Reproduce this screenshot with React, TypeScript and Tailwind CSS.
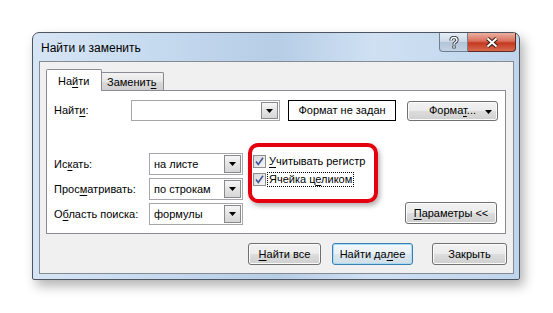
import React from 'react';

const U: React.FC<{ children: React.ReactNode }> = ({ children }) => (
  <span className="underline underline-offset-[2px] decoration-1">{children}</span>
);

const Arrow: React.FC = () => (
  <svg width="7" height="4" viewBox="0 0 7 4">
    <path d="M0 0h7L3.5 4z" fill="#000" />
  </svg>
);

interface ComboProps {
  value?: string;
  className?: string;
}

const Combo: React.FC<ComboProps> = ({ value = '', className = '' }) => (
  <div className={`flex items-stretch border border-[#a5a7ad] bg-white ${className}`}>
    <div className="flex-1 pl-[4px] flex items-center leading-none whitespace-nowrap">{value}</div>
    <div className="w-[17px] m-px flex items-center justify-center border border-[#8a8a8a] bg-[linear-gradient(#f6f6f6,#e4e4e4_50%,#d6d6d6)]">
      <Arrow />
    </div>
  </div>
);

interface WinButtonProps {
  children: React.ReactNode;
  className?: string;
  primary?: boolean;
}

const WinButton: React.FC<WinButtonProps> = ({ children, className = '', primary = false }) => (
  <div
    className={`flex items-center justify-center rounded-[3px] border leading-none whitespace-nowrap ${
      primary
        ? 'border-[#3c7fb1] bg-[linear-gradient(#f3f8fb,#e8f0f5_50%,#dbe6ee_51%,#d2dfe8)] shadow-[inset_0_0_0_1px_#a8dcf6]'
        : 'border-[#707070] bg-[linear-gradient(#f2f2f2,#ebebeb_49%,#dddddd_50%,#cfcfcf)] shadow-[inset_0_0_0_1px_#fbfbfb]'
    } ${className}`}
  >
    {children}
  </div>
);

const CheckBox: React.FC = () => (
  <div className="w-[13px] h-[13px] shrink-0 border border-[#8e8f8f] bg-[linear-gradient(135deg,#d8d8d8,#f6f6f6)] flex items-center justify-center">
    <svg width="9" height="9" viewBox="0 0 9 9">
      <path d="M1 4.5l2.3 3L8 0.8" stroke="#3f5494" strokeWidth="1.6" fill="none" />
    </svg>
  </div>
);

export default function App() {
  return (
    <div className="w-[553px] h-[313px] bg-white pl-[32px] pt-[32px] font-['Liberation_Sans',Arial,sans-serif] text-[11px] text-black">
      {/* window */}
      <div className="w-[488px] h-[248px] flex flex-col rounded-t-[7px] rounded-b-[2px] border border-[#4f5560] shadow-[4px_6px_12px_rgba(0,0,0,0.3)] bg-[linear-gradient(to_right,#d6e5f5,#c6daef_25%,#b6cde6_50%,#cfe0f2_70%,#bfd5ec)]">
        {/* title bar */}
        <div className="h-[28px] flex items-start">
          <div className="pl-[8px] pt-[9px] leading-none text-[12px]">Найти и заменить</div>
          <div className="ml-auto mr-[3px] flex h-[19px]">
            <div className="w-[29px] flex items-center justify-center rounded-bl-[4px] border border-t-0 border-[#6f7f93] bg-[linear-gradient(#e6edf5,#ccd8e6_50%,#b3c3d6_51%,#c4d2e2)]">
              <svg width="10" height="13" viewBox="0 0 10 13">
                <path d="M2 4.5C2 2 3.5 1.5 5 1.5S8 2.3 8 4.2C8 6.3 5 6.2 5 8.5" stroke="#2b3440" strokeWidth="3.2" fill="none" />
                <rect x="3.4" y="9.6" width="3.2" height="2.8" fill="#2b3440" />
                <path d="M2 4.5C2 2 3.5 1.5 5 1.5S8 2.3 8 4.2C8 6.3 5 6.2 5 8.5" stroke="#fff" strokeWidth="1.4" fill="none" />
                <rect x="4.2" y="10.2" width="1.6" height="1.6" fill="#fff" />
              </svg>
            </div>
            <div className="w-[48px] flex items-center justify-center rounded-br-[4px] border border-l-0 border-t-0 border-[#5e2b22] bg-[linear-gradient(#eab0a2,#d9705c_45%,#c4381f_55%,#d66a4f)]">
              <svg width="14" height="11" viewBox="0 0 14 11">
                <path d="M2.5 1.5l9 8M11.5 1.5l-9 8" stroke="#3a1a14" strokeWidth="4" />
                <path d="M2.5 1.5l9 8M11.5 1.5l-9 8" stroke="#fff" strokeWidth="2" />
              </svg>
            </div>
          </div>
        </div>

        {/* dialog face */}
        <div className="ml-[6px] mr-[5px] h-[213px] w-[475px] border border-[#858b93] bg-[#f0f0f0] px-[6px] pt-[7px] flex flex-col">
          {/* tabs */}
          <div className="h-[21px] flex items-end">
            <div className="relative z-10 -mb-px h-[22px] w-[56px] border border-b-0 border-[#898c95] bg-white rounded-t-[2px] pl-[11px] pt-[6px] leading-none">
              На<U>й</U>ти
            </div>
            <div className="-ml-px h-[18px] w-[63px] border border-b-0 border-[#898c95] bg-[linear-gradient(#f3f3f3,#e6e6e6_50%,#d9d9d9_51%,#d0d0d0)] rounded-t-[2px] pl-[5px] pt-[4px] leading-none">
              Заменит<U>ь</U>
            </div>
          </div>

          {/* tab page */}
          <div className="h-[144px] w-[460px] border border-[#898c95] bg-white flex flex-col">
            <div className="mt-[9px] pl-[7px] pr-[7px] flex items-center h-[21px]">
              <div className="w-[77px] leading-none">Найт<U>и</U>:</div>
              <Combo className="w-[149px] h-[21px]" />
              <div className="ml-[8px] w-[108px] h-[21px] border border-black flex items-center justify-center leading-none">
                Формат не задан
              </div>
              <WinButton className="ml-auto w-[91px] h-[20px] relative">
                <span>Форма<U>т</U>...</span>
                <span className="absolute right-[5px] top-[8px]">
                  <svg width="7" height="4" viewBox="0 0 7 4"><path d="M0 0h7L3.5 4z" fill="#000" /></svg>
                </span>
              </WinButton>
            </div>

            <div className="mt-[22px] pl-[7px] pr-[8px] flex items-start">
              <div className="pt-[10px] grid grid-cols-[95px_94px] gap-y-[3px] items-center">
                <div className="leading-none">Ис<U>к</U>ать:</div>
                <Combo className="h-[22px]" value="на листе" />
                <div className="leading-none">Прос<U>м</U>атривать:</div>
                <Combo className="h-[22px]" value="по строкам" />
                <div className="leading-none">О<U>б</U>ласть поиска:</div>
                <Combo className="h-[22px]" value="формулы" />
              </div>

              <div className="ml-[5px] w-[130px] h-[60px] rounded-[10px] border-[4px] border-[#e5000f] shadow-[2px_3px_5px_rgba(0,0,0,0.3)] pl-px pt-[8px] flex flex-col gap-[5px]">
                <div className="flex items-center h-[13px]">
                  <CheckBox />
                  <span className="ml-[3px] leading-none whitespace-nowrap"><U>У</U>читывать регистр</span>
                </div>
                <div className="flex items-center h-[13px]">
                  <CheckBox />
                  <span className="ml-px px-[1px] py-[1px] border border-dotted border-black leading-none whitespace-nowrap">
                    Ячейка ц<U>е</U>ликом
                  </span>
                </div>
              </div>

              <WinButton className="ml-auto mt-[59px] w-[92px] h-[22px]">
                <span><U>П</U>араметры &lt;&lt;</span>
              </WinButton>
            </div>
          </div>

          {/* bottom buttons */}
          <div className="mt-[9px] flex justify-end">
            <WinButton className="w-[73px] h-[22px]">
              <span><U>Н</U>айти все</span>
            </WinButton>
            <WinButton primary className="ml-[11px] w-[81px] h-[22px]">
              <span>Найти да<U>л</U>ее</span>
            </WinButton>
            <WinButton className="ml-[19px] w-[75px] h-[22px]">
              <span>Закрыть</span>
            </WinButton>
          </div>
        </div>
      </div>
    </div>
  );
}
